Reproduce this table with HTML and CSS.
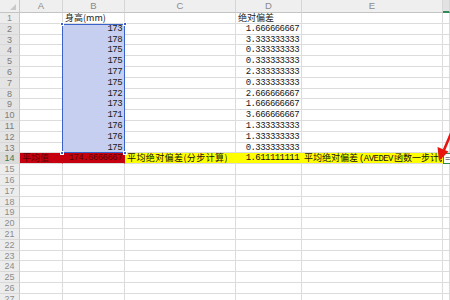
FILE: index.html
```html
<!DOCTYPE html>
<html>
<head>
<meta charset="utf-8">
<link rel="stylesheet" href="styles.css">
</head>
<body>
<div class="sheet">
  <div class="r"><i class="corner"><span class="tri"></span></i><u>A</u><u>B</u><u>C</u><u>D</u><u>E</u><u class="hact"></u></div>
  <div class="r"><i>1</i><b></b><b class="cj">身高(mm)</b><b></b><b class="cj">绝对偏差</b><b></b><b></b></div>
  <div class="r"><i class="hs">2</i><b></b><b class="n sel">173</b><b></b><b class="n">1.666666667</b><b></b><b></b></div>
  <div class="r"><i class="hs">3</i><b></b><b class="n sel">178</b><b></b><b class="n">3.333333333</b><b></b><b></b></div>
  <div class="r"><i class="hs">4</i><b></b><b class="n sel">175</b><b></b><b class="n">0.333333333</b><b></b><b></b></div>
  <div class="r"><i class="hs">5</i><b></b><b class="n sel">175</b><b></b><b class="n">0.333333333</b><b></b><b></b></div>
  <div class="r"><i class="hs">6</i><b></b><b class="n sel">177</b><b></b><b class="n">2.333333333</b><b></b><b></b></div>
  <div class="r"><i class="hs">7</i><b></b><b class="n sel">175</b><b></b><b class="n">0.333333333</b><b></b><b></b></div>
  <div class="r"><i class="hs">8</i><b></b><b class="n sel">172</b><b></b><b class="n">2.666666667</b><b></b><b></b></div>
  <div class="r"><i class="hs">9</i><b></b><b class="n sel">173</b><b></b><b class="n">1.666666667</b><b></b><b></b></div>
  <div class="r"><i class="hs">10</i><b></b><b class="n sel">171</b><b></b><b class="n">3.666666667</b><b></b><b></b></div>
  <div class="r"><i class="hs">11</i><b></b><b class="n sel">176</b><b></b><b class="n">1.333333333</b><b></b><b></b></div>
  <div class="r"><i class="hs">12</i><b></b><b class="n sel">176</b><b></b><b class="n">1.333333333</b><b></b><b></b></div>
  <div class="r"><i class="hs">13</i><b></b><b class="n sel">175</b><b></b><b class="n">0.333333333</b><b></b><b></b></div>
  <div class="r"><i class="hact14">14</i><b class="red cj">平均值</b><b class="red n">174.6666667</b><b class="yel cj wide">平均绝对偏差(分步计算)</b><b class="yel n">1.611111111</b><b class="yel cj clip">平均绝对偏差<span class="m">(AVEDEV</span>函数一步计算)</b><b class="act n">=</b></div>
  <div class="r"><i>15</i><b></b><b></b><b></b><b></b><b></b><b></b></div>
  <div class="r"><i>16</i><b></b><b></b><b></b><b></b><b></b><b></b></div>
  <div class="r"><i>17</i><b></b><b></b><b></b><b></b><b></b><b></b></div>
  <div class="r"><i>18</i><b></b><b></b><b></b><b></b><b></b><b></b></div>
  <div class="r"><i>19</i><b></b><b></b><b></b><b></b><b></b><b></b></div>
  <div class="r"><i>20</i><b></b><b></b><b></b><b></b><b></b><b></b></div>
  <div class="r"><i>21</i><b></b><b></b><b></b><b></b><b></b><b></b></div>
  <div class="r"><i>22</i><b></b><b></b><b></b><b></b><b></b><b></b></div>
  <div class="r"><i>23</i><b></b><b></b><b></b><b></b><b></b><b></b></div>
  <div class="r"><i>24</i><b></b><b></b><b></b><b></b><b></b><b></b></div>
  <div class="r"><i>25</i><b></b><b></b><b></b><b></b><b></b><b></b></div>
  <div class="r"><i>26</i><b></b><b></b><b></b><b></b><b></b><b></b></div>
  <div class="r"><i>27</i><b></b><b></b><b></b><b></b><b></b><b></b></div>

  <div class="selbox">
    <span class="h tl"></span><span class="h tr"></span><span class="h bl"></span><span class="h br"></span>
  </div>
  <svg class="arrow" width="450" height="300" viewBox="0 0 450 300">
    <line x1="452" y1="131" x2="444" y2="150" stroke="#e8140e" stroke-width="2.6"/>
    <polygon points="439,161 437.5,147 448.5,151.5" fill="#e8140e"/>
  </svg>
</div>
</body>
</html>
```
FILE: styles.css
```css
html, body {
  margin: 0;
  padding: 0;
  background: #ffffff;
  overflow: hidden;
}
.sheet {
  position: relative;
  width: 450px;
  height: 300px;
  overflow: hidden;
  display: grid;
  grid-template-columns: 20px 43px 62px 111px 66px 141px 7px;
  grid-template-rows: 13px repeat(27, 10.8px);
  font-family: "Liberation Mono", monospace;
}
.r { display: contents; }
.r > i, .r > u, .r > b {
  font-style: normal;
  text-decoration: none;
  font-weight: normal;
  box-sizing: border-box;
  white-space: nowrap;
}
.r > u {
  background: #efefef;
  border-right: 1px solid #d6d6d6;
  border-bottom: 1px solid #c4c4c4;
  color: #8a8a8a;
  font-family: "Liberation Sans", sans-serif;
  font-size: 9.5px;
  line-height: 12px;
  text-align: center;
}
.r > u.hact {
  background: #e2e2e2;
  border-bottom: 2px solid #2e8b57;
}
.r > i {
  background: #ececec;
  border-right: 1px solid #c8c8c8;
  border-bottom: 1px solid #d8d8d8;
  color: #8c8c8c;
  font-family: "Liberation Sans", sans-serif;
  font-size: 9px;
  line-height: 10px;
  text-align: center;
}
.r > i.hs { background: #e4e4e4; color: #7c7c7c; }
.r > i.hact14 { background: #dcdcdc; color: #3d7a55; }
.r > i.corner {
  background: #efefef;
  border-bottom: 1px solid #c4c4c4;
  position: relative;
}
.tri {
  position: absolute;
  right: 3px;
  bottom: 2px;
  width: 0;
  height: 0;
  border-left: 6px solid transparent;
  border-bottom: 6px solid #c9c9c9;
}
.r > b {
  border-right: 1px solid #dcdcdc;
  border-bottom: 1px solid #dcdcdc;
  color: #1a1a1a;
  font-size: 9px;
  line-height: 10px;
  padding: 0 2px;
  overflow: visible;
}
.r > b.n {
  text-align: right;
  letter-spacing: -0.55px;
  font-size: 9px;
}
.r > b.cj {
  font-family: "Noto Sans CJK SC", sans-serif;
  font-size: 9px;
  line-height: 10px;
  letter-spacing: 0;
}
.r > b.wide { letter-spacing: 0.4px; }
.m {
  font-family: "Liberation Mono", monospace;
  letter-spacing: -0.55px;
  padding: 0 1px;
}
.r > b.sel { background: #c6cff0; border-bottom-color: #c6cff0; border-right-color: #c6cff0; }
.r > b.red { background: #c70010; color: #5a0006; border-right-color: #c70010; }
.r > b.yel { background: #ffff00; color: #111; border-right-color: #ffff00; }
.r > b.clip { overflow-x: clip; overflow-y: visible; }
.r > b.act {
  border: 1.5px solid #2a8a4a;
  border-right: none;
  text-align: left;
  padding-left: 1px;
  font-size: 9px;
}
.selbox {
  position: absolute;
  left: 62px;
  top: 23.8px;
  width: 63px;
  height: 129.6px;
  box-sizing: border-box;
  border: 1px solid #3a62c8;
  pointer-events: none;
}
.h {
  position: absolute;
  width: 4px;
  height: 4px;
  background: #3a62c8;
  border: 1px solid #ffffff;
  box-sizing: border-box;
}
.h.tl { left: -3px; top: -3px; }
.h.tr { right: -3px; top: -3px; }
.h.bl { left: -3px; bottom: -3px; }
.h.br { right: -3px; bottom: -3px; }
.arrow {
  position: absolute;
  left: 0;
  top: 0;
  pointer-events: none;
}
```
